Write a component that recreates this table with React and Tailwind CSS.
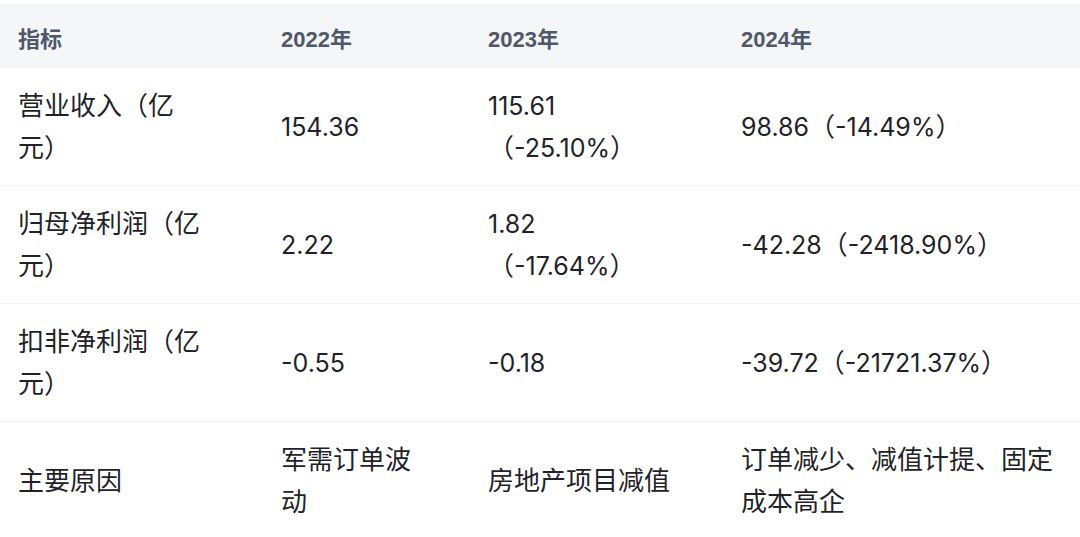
import React from "react";

const cols = [
  { w: "w-[263px]", pr: "pr-[55px]" },
  { w: "w-[207px]", pr: "pr-[49px]" },
  { w: "w-[253px]", pr: "pr-[52px]" },
  { w: "flex-1", pr: "pr-[20px]" },
];

const headers = ["指标", "2022年", "2023年", "2024年"];

const rows = [
  ["营业收入（亿元）", "154.36", "115.61（-25.10%）", "98.86（-14.49%）"],
  ["归母净利润（亿元）", "2.22", "1.82（-17.64%）", "-42.28（-2418.90%）"],
  ["扣非净利润（亿元）", "-0.55", "-0.18", "-39.72（-21721.37%）"],
  ["主要原因", "军需订单波动", "房地产项目减值", "订单减少、减值计提、固定成本高企"],
];

// CJK glyphs in the screenshot run a touch larger than the digits
const Mixed = ({ text }) => {
  const parts = text.split(/([\u3000-\u9fff\uff00-\uffef]+)/).filter(Boolean);
  return (
    <span>
      {parts.map((p, i) =>
        /[\u3000-\u9fff\uff00-\uffef]/.test(p) ? (
          <span key={i} className="text-[26px]">{p}</span>
        ) : (
          <span key={i}>{p}</span>
        )
      )}
    </span>
  );
};

const App = () => {
  return (
    <div
      className="w-[1080px] h-[537px] overflow-hidden bg-white pt-[4px]"
      style={{ fontFamily: 'Inter, "Noto Sans CJK SC", sans-serif' }}
    >
      {/* header */}
      <div
        className="flex h-[64px] bg-[#f5f6f8]"
        style={{ fontFamily: '"Liberation Sans", "Noto Sans CJK SC", sans-serif' }}
      >
        {headers.map((h, i) => (
          <div
            key={h}
            className={`${cols[i].w} ${cols[i].pr} pl-[18px] pt-[6px] flex items-center text-[22px] font-bold text-[#50576a]`}
          >
            {h}
          </div>
        ))}
      </div>

      {/* body rows */}
      {rows.map((row, r) => (
        <div key={r} className="flex border-b border-[#eff1f4] min-h-[118px]">
          {row.map((cell, i) => (
            <div
              key={i}
              className={`${cols[i].w} ${cols[i].pr} pl-[18px] py-[16px] flex items-center text-[25px] leading-[42px] text-[#1f2329]`}
            >
              <Mixed text={cell} />
            </div>
          ))}
        </div>
      ))}
    </div>
  );
};

export default App;
